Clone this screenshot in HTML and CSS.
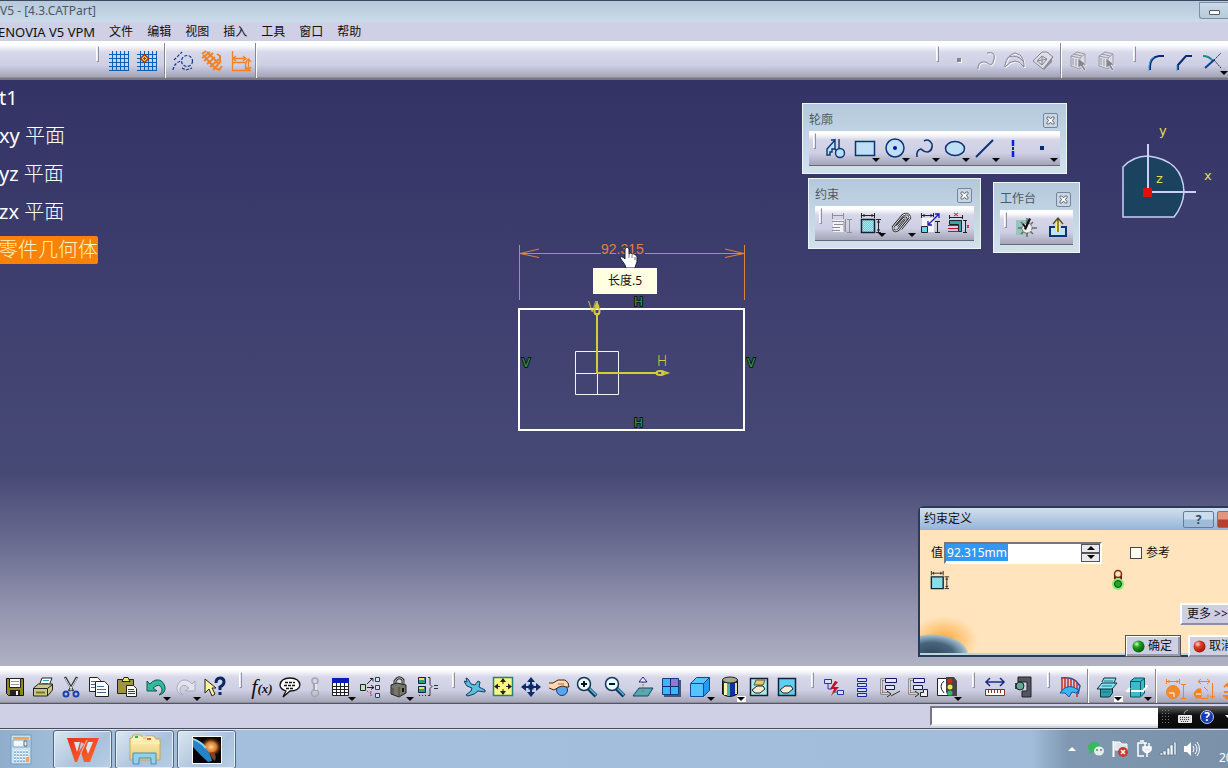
FILE: index.html
```html
<!DOCTYPE html>
<html lang="zh-CN">
<head>
<meta charset="utf-8">
<title>V5 - [4.3.CATPart]</title>
<link rel="stylesheet" href="styles.css">
</head>
<body>
<svg class="defs" aria-hidden="true">
  <defs>
    <radialGradient id="ball-green" cx=".35" cy=".3" r=".8"><stop offset="0" stop-color="#c8ffc0"/><stop offset=".35" stop-color="#1ba01b"/><stop offset="1" stop-color="#054d08"/></radialGradient>
    <radialGradient id="ball-red" cx=".35" cy=".3" r=".8"><stop offset="0" stop-color="#ffd8c8"/><stop offset=".35" stop-color="#e23a22"/><stop offset="1" stop-color="#8a1408"/></radialGradient>
    <linearGradient id="wps" x2="1" y2="1"><stop offset="0" stop-color="#e8301c"/><stop offset="1" stop-color="#ff6a2c"/></linearGradient>
    <linearGradient id="folder" y2="1" x2="0"><stop offset="0" stop-color="#fff3b8"/><stop offset="1" stop-color="#e8cc78"/></linearGradient>
    <radialGradient id="glow" cx=".5" cy=".5" r=".5"><stop offset="0" stop-color="#ffd690"/><stop offset=".5" stop-color="#d9782c"/><stop offset="1" stop-color="#3a1404" stop-opacity="0"/></radialGradient>
    <pattern id="mesh" width="2" height="2" patternUnits="userSpaceOnUse"><path fill="#5fd0e0" d="M0 0h2v2H0z"/><path fill="#a8ecf2" d="M0 0h1v1H0zM1 1h1v1H1z"/></pattern>
    <symbol id="grid" viewBox="0 0 22 22"><path d="M4.500 1v20M8.500 1v20M12.500 1v20M16.500 1v20M1 4.500h20M1 8.500h20M1 12.500h20M1 16.500h20M20.500 1v20M1 20.500h20" stroke="#0a5fb4" fill="none"/></symbol>
    <symbol id="cursor-box" viewBox="0 0 22 22"><path d="M4 7l6-5 8 2v11l-5 5-9-3z" fill="#dcdce8"/><path d="M3 6l6-4 8 2v11l-5 4-9-3zM3 6l9 2v11M12 8l5-4M5 8v7M8 9v7M6 4l8 2" fill="none" stroke="#999aa6"/><path d="M10 8v10l3-2 3 5 2-1-3-5h4z" fill="#85858f" stroke="#f4f4fa" stroke-width=".6"/></symbol>
    <symbol id="dimension" viewBox="0 0 22 22"><path d="M1.500 7.500h13v13h-13z" fill="url(#mesh)" stroke="#123" stroke-width="1.500"/><path d="M1.500 1v5M14.500 1v5M2 3.500h12M4 2v3M12 2v3M16 7.500h5M16 20.500h5M18.500 8v12M17 10h3M17 18h3" fill="none" stroke="#222"/></symbol>
    <symbol id="tree-lines" viewBox="0 0 22 22"><path d="M7 3.500H2.500v14H9" fill="none" stroke="#554" stroke-width="2"/><path d="M7 3.500H2.500v14H9" fill="none" stroke="#ece06a"/><path d="M6.500 2.500h11v4h-11zM6.500 9.500h9v4h-9z" fill="#e5e8ff" stroke="#141468"/><path d="M8 15l4 3-4 3" fill="none" stroke="#222"/></symbol>
    <symbol id="close" viewBox="0 0 9 9"><path d="M1 1h2l1.500 2L6 1h2v2L6 4.500 8 6v2H6L4.500 6 3 8H1V6l2-1.500L1 3z" fill="#fff" stroke="#4a5564" stroke-width=".8"/></symbol>
  </defs>
</svg>

<header class="titlebar">
  <h1 class="titlebar-text">V5 - [4.3.CATPart]</h1>
  <button class="minimize" aria-label="最小化"><span></span></button>
</header>

<nav class="menu">
  <button class="latin">ENOVIA V5 VPM</button><button>文件</button><button>编辑</button><button>视图</button><button>插入</button><button>工具</button><button>窗口</button><button>帮助</button>
</nav>

<div class="bar bar-top">
  <div class="cluster cluster-left">
    <i class="grip"></i>
    <button class="tool" aria-label="网格"><svg><use href="#grid"/></svg></button>
    <button class="tool" aria-label="点对齐"><svg viewBox="0 0 22 22"><use href="#grid"/><path d="M8.500 4.500l4 4-4 4-4-4z" fill="#f7e25a" stroke="#a3340c" stroke-width="1.500"/><path d="M8.500 7v3M7 8.500h3" stroke="#a3340c"/></svg></button>
    <i class="divider"></i>
    <button class="tool" aria-label="构造元素"><svg viewBox="0 0 22 22" fill="none" stroke="#0c3c8c" stroke-width="1.200" stroke-dasharray="3 1.500"><path d="M1 20q1-7 8-9M2 10l8-8" /><circle cx="15" cy="11" r="5.500"/><path d="M10 18l4 2 6-2"/></svg></button>
    <button class="tool drop-space" aria-label="几何约束"><svg viewBox="0 0 22 22" fill="none" stroke="#f08326" stroke-width="2"><path d="M1 4l4-3M1 8l8-6M3 11l9-8M6 14l8-7M9 17l9-8M12 20l8-9M2 5l12 13M6 2l11 11M16 4l3 2v5M14 18l4 2 3-4"/></svg></button>
    <button class="tool" aria-label="尺寸约束"><svg viewBox="0 0 22 22" fill="none" stroke="#f08326" stroke-width="1.300"><path d="M2.500 1v19.500h13V12M3 8.500h13M6 6L3 8.500 6 11M13 6l3 2.500-3 2.500M2 12.500h15M18.500 9v11M16 12l2.500-3 2.500 3M16 17l2.500 3 2.500-3M14 20.500h7"/></svg></button>
    <i class="divider divider-end"></i>
  </div>
  <div class="cluster cluster-right">
    <i class="grip"></i>
    <button class="tool" aria-label="点"><svg viewBox="0 0 22 22"><path d="M10 9h4v4h-4z" fill="#fff"/><path d="M9 8h4v4H9z" fill="#85858f"/></svg></button>
    <button class="tool" aria-label="曲线"><svg viewBox="0 0 22 22" fill="none"><path d="M3 20q0-6 4-7t7 2 5-5-7-6" stroke="#fff"/><path d="M2 19q0-6 4-7t7 2 5-5-7-6" stroke="#858590"/></svg></button>
    <button class="tool" aria-label="曲面"><svg viewBox="0 0 22 22" fill="none"><path d="M2 16Q4 6 12 4l5 2q4 3 4 12-4-6-9-6t-10 6z" stroke="#fff"/><path d="M1 15Q3 5 11 3l5 2q4 3 4 12-4-6-9-6t-10 6zM5 7q8-3 14 4" stroke="#858590"/></svg></button>
    <button class="tool" aria-label="实体"><svg viewBox="0 0 22 22"><path d="M1 11L10 2h5l6 5-10 12z" fill="#dedee8" stroke="#858590"/><path d="M11 19l9-12v5l-8 8z" fill="#8f8f99"/><path d="M5 11l5-5 5 3-5 6zM5 11l5-1 5-1M10 6v9" fill="none" stroke="#85858f"/></svg></button>
    <i class="divider"></i>
    <button class="tool" aria-label="选择体"><svg><use href="#cursor-box"/></svg></button>
    <button class="tool" aria-label="选择面"><svg><use href="#cursor-box"/></svg></button>
    <i class="grip grip-far"></i>
    <button class="tool" aria-label="圆角"><svg viewBox="0 0 22 22" fill="none"><path d="M5 20v-3Q5 7 14 6h5" stroke="#082c72" stroke-width="2"/><path d="M4 21v-5q1-7 5-9" stroke="#39a4e8"/></svg></button>
    <button class="tool" aria-label="倒角"><svg viewBox="0 0 22 22" fill="none"><path d="M5 20v-5l8-9h6" stroke="#082c72" stroke-width="2"/><path d="M4 21v-6" stroke="#39a4e8"/></svg></button>
    <button class="tool drop" aria-label="修剪"><svg viewBox="0 0 22 22" fill="none"><path d="M1 6q6 0 10 5" stroke="#1b8b91" stroke-width="2"/><path d="M3 18l9-8" stroke="#0b3e9e" stroke-width="2"/><path d="M12 10l7-7M12 10l7 8" stroke="#222" stroke-dasharray="2 1"/></svg></button>
  </div>
</div>

<main class="canvas">
  <ul class="tree">
    <li><span>t1</span></li><li><span>xy</span> 平面</li><li><span>yz</span> 平面</li><li><span>zx</span> 平面</li><li class="active">零件几何体</li>
  </ul>

  <svg class="sketch" viewBox="510 240 250 200" fill="none">
    <g stroke="#e0813c"><path d="M519.500 245v55M744.500 245v55M520 253.500h81M645 253.500h99" /><path d="M539 249l-19 4.500 19 4M725 249l19 4.500-19 4"/></g>
    <text class="dim" x="601" y="254">92.315</text>
    <path d="M519 309h225v121H519z" stroke="#fff" stroke-width="2"/>
    <path d="M575.500 351.500h43v43h-43zM575.500 373.500h22M597.500 373v21" stroke="#f3f3ff"/>
    <g stroke="#d4cc3c" stroke-width="2"><path d="M597 374v-61M596 373h62"/><ellipse cx="597" cy="311" rx="2.500" ry="3.500"/><ellipse cx="660" cy="373" rx="3.500" ry="2"/><path d="M597 301v6M595 307l2-4 2 4M662 371l6 2-6 2z" stroke-width="1.500"/></g>
    <g class="axis-names"><text x="657" y="366">H</text><text x="588" y="312">V</text></g>
    <g class="marks"><text x="634" y="306">H</text><text x="634" y="427">H</text><text x="522" y="367">V</text><text x="747" y="367">V</text></g>
    <path d="M625 249q2-4 4 0v5q2-2 3 0 3-1 3 1 2-1 2 2v5q-1 2-2 6h-9q-1-4-3-6l-3-4q1-3 5 1z" fill="#fff" stroke="#181c38"/><path d="M629 254v4M632 255v3M635 257v3" stroke="#777"/>
  </svg>
  <div class="tooltip">长度.5</div>

  <svg class="compass" viewBox="1110 115 118 115" fill="none">
    <path d="M1123 167q10-11 25-11 35 4 36 36-1 14-10 25h-51z" fill="#1b435f" stroke="#c9cff6" stroke-width="1.500"/>
    <path d="M1148 144v48h48" stroke="#c9cff6" stroke-width="2"/><path d="M1143 188h9v9h-9z" fill="#e01208"/>
    <g class="axes"><text x="1159" y="135">y</text><text x="1204" y="180">x</text><text x="1156" y="183">z</text></g>
  </svg>

  <section class="palette palette-profile">
    <header><h2>轮廓</h2><button class="palette-close" aria-label="关闭"><svg><use href="#close"/></svg></button></header>
    <div class="palette-tools"><i class="grip"></i>
      <button class="tool" aria-label="轮廓"><svg viewBox="0 0 22 22" fill="#b9e0f8" stroke="#0b3474" stroke-width="1.400"><path d="M2 18v-6l8-9v9H7v3H5v3zM6 3h4v4" /><path d="M10 12l3 3"/><path d="M14 2v10"/><circle cx="15" cy="16" r="4.500"/></svg></button>
      <button class="tool drop" aria-label="矩形"><svg viewBox="0 0 22 22"><path d="M1.500 4.500h19v14h-19z" fill="#bedff5" stroke="#0b3474" stroke-width="1.500"/></svg></button>
      <button class="tool drop" aria-label="圆"><svg viewBox="0 0 22 22"><circle cx="11" cy="11" r="9" fill="#bedff5" stroke="#0b3474" stroke-width="1.500"/><circle cx="11" cy="11" r="2" fill="#0a13a0"/></svg></button>
      <button class="tool drop" aria-label="样条线"><svg viewBox="0 0 22 22" fill="none" stroke="#0b3474" stroke-width="1.500"><path d="M3 20q-1-7 4-8 3 3 7 3 5-2 4-8-3-6-8-3"/></svg></button>
      <button class="tool drop" aria-label="椭圆"><svg viewBox="0 0 22 22"><ellipse cx="11" cy="11.500" rx="9.500" ry="7" fill="#bedff5" stroke="#0b3474" stroke-width="1.500"/></svg></button>
      <button class="tool drop" aria-label="直线"><svg viewBox="0 0 22 22"><path d="M2 20L19 3" stroke="#0b3474" stroke-width="2"/></svg></button>
      <button class="tool" aria-label="轴"><svg viewBox="0 0 22 22"><path d="M10 3v6M10 14v6" stroke="#0720d8" stroke-width="2.500"/><path d="M10 10v3" stroke="#0b3474" stroke-width="2"/></svg></button>
      <button class="tool drop" aria-label="点"><svg viewBox="0 0 22 22"><path d="M8 9h4v4H8z" fill="#072a6c"/></svg></button>
    </div>
  </section>

  <section class="palette palette-constraint">
    <header><h2>约束</h2><button class="palette-close" aria-label="关闭"><svg><use href="#close"/></svg></button></header>
    <div class="palette-tools"><i class="grip"></i>
      <button class="tool" aria-label="约束对话框"><svg viewBox="0 0 22 22" fill="none" stroke="#8e8e98"><path d="M2 8h11v12H2z" fill="#f1f1f6" stroke="none"/><path d="M1.500 1v6M12.500 1v6M2 3.500h10M1 9.500h12v10M3 12.500h9M1 15.500h8M1 18.500h8M16 7.500h5M16 20.500h5M18.500 8v12M14.500 7v13"/></svg></button>
      <button class="tool drop" aria-label="约束"><svg><use href="#dimension"/></svg></button>
      <button class="tool drop" aria-label="固联"><svg viewBox="0 0 22 22" fill="none"><path d="M7 14l7-8q3-1 2 2L8 18q-5 3-5-3L13 3q6-3 7 3L11 17" stroke="#222" stroke-width="2.400"/><path d="M7 14l7-8q3-1 2 2L8 18q-5 3-5-3L13 3q6-3 7 3L11 17" stroke="#f4f4f8"/></svg></button>
      <button class="tool" aria-label="动画约束"><svg viewBox="0 0 22 22" fill="none" stroke="#222"><path d="M3 6h12v14H3z" fill="#f4f4f8" stroke="none"/><path d="M2.500 1v5M14.500 1v4M3 3.500h11M5 2v3M12 2v3M18.500 9v11M16 9.500h5M16 20.500h5"/><path d="M2.500 14.500h6v6h-6z" fill="#67d8ec"/><path d="M9 13l11-11M16 2h4v4M9 9v4h4" stroke="#1919b0" stroke-width="1.300"/></svg></button>
      <button class="tool" aria-label="编辑多重约束"><svg viewBox="0 0 22 22" fill="none" stroke="#222"><path d="M2.500 3v4M15.500 3v4M3 5.500h12M18.500 8v12M16 8.500h4M16 20.500h4"/><path d="M2.500 8.500h12v11h-3v-7h-9z" fill="#38a4ac"/><path d="M1 13.500h10M1 16.500h10M1 19.500h10M7 1l4 3M11 1L7 4M20 13l2 3M22 13l-2 3" stroke="#c8102c"/></svg></button>
    </div>
  </section>

  <section class="palette palette-workbench">
    <header><h2>工作台</h2><button class="palette-close" aria-label="关闭"><svg><use href="#close"/></svg></button></header>
    <div class="palette-tools"><i class="grip"></i>
      <button class="tool" aria-label="草图编辑器"><svg viewBox="0 0 22 22"><path d="M0 4h12v15H0z" fill="#95c5bc"/><g stroke="#666c66" stroke-width="1.500"><path d="M11 2v19M2 12h19M5 6l12 12M17 6L5 18"/></g><circle cx="11" cy="12" r="5" fill="#eee" stroke="#666" stroke-dasharray="2 1"/><path d="M13 2l2 1-5 11-2-1z" fill="#111"/><path d="M7 8l3 4" stroke="#111" stroke-width="2"/></svg></button>
      <button class="tool workbench-exit" aria-label="退出工作台"><svg viewBox="0 0 22 22"><path d="M3 11h16v9H3z" fill="#bfe4f6"/><path d="M8 11H3v9h16v-9h-5" fill="none" stroke="#0b3474" stroke-width="2"/><path d="M9 6h4v10H9z" fill="#fff07a"/><path d="M6 8l5-6 5 6M11 3v13" fill="none" stroke="#5a4c10" stroke-width="1.300"/></svg></button>
    </div>
  </section>

  <form class="dialog">
    <header><h2>约束定义</h2><button type="button" class="win-btn" aria-label="帮助">?</button><button type="button" class="win-btn win-close" aria-label="关闭">✕</button></header>
    <div class="dialog-body">
      <div class="value-row">
        <label for="value">值</label>
        <span class="spin"><span class="spin-field"><input id="value" value="92.315mm"></span><span class="spin-buttons"><button type="button" aria-label="增加"></button><button type="button" class="down" aria-label="减少"></button></span></span>
        <label class="check"><input type="checkbox">参考</label>
      </div>
      <div class="icon-row">
        <svg class="small-icon"><use href="#dimension"/></svg>
        <svg class="lock-icon" viewBox="0 0 16 22" fill="none"><path d="M5 12V6M11 12V6" stroke="#6c1a12" stroke-width="2"/><circle cx="8" cy="5" r="3.500" fill="#ffe4c0" stroke="#8a2018" stroke-width="1.500"/><circle cx="8" cy="15" r="6" fill="#88ea70"/><circle cx="8" cy="15" r="3.500" fill="#22a52a" stroke="#064c10"/></svg>
      </div>
      <div class="more-row"><button type="button" class="more">更多 &gt;&gt;</button></div>
      <div class="actions">
        <button type="button" class="default"><svg viewBox="0 0 14 14"><circle cx="7" cy="7" r="6.500" fill="url(#ball-green)"/></svg>确定</button>
        <button type="button"><svg viewBox="0 0 14 14"><circle cx="7" cy="7" r="6.500" fill="url(#ball-red)"/></svg>取消</button>
      </div>
    </div>
  </form>
</main>

<div class="bar bar-bottom">
  <button class="tool" aria-label="保存"><svg viewBox="0 0 22 22"><path d="M2.500 2.500h17v17h-15l-2-2z" fill="#8c8a1c" stroke="#111"/><path d="M5.500 2.500h11v9h-11z" fill="#fff" stroke="#222"/><path d="M7 5.500h8M7 8.500h8" stroke="#999"/><path d="M6 14h10v5H6z" fill="#222"/><path d="M12 15h2v4h-2z" fill="#fff"/></svg></button>
  <button class="tool" aria-label="打印"><svg viewBox="0 0 22 22" stroke="#222"><path d="M7 10l3-8h10l-3 8z" fill="#fff"/><path d="M11 4.500h6M10 7.500h6" stroke="#19a8c0"/><path d="M1.500 12l5-4h14v6l-5 6h-14z" fill="#c9c98c"/><path d="M2 12.500h13.500l5-4M15.500 13v7" fill="none"/><path d="M4 16.500h9" stroke="#777722" stroke-width="2"/></svg></button>
  <button class="tool" aria-label="剪切"><svg viewBox="0 0 22 22" fill="none"><path d="M5 1l8 14M17 1L9 15" stroke="#333" stroke-width="2.500"/><path d="M5 2l7 12M17 2l-7 12" stroke="#dfe8ee"/><circle cx="6" cy="18" r="2.500" stroke="#1742b0" stroke-width="2"/><circle cx="16" cy="18" r="2.500" stroke="#1742b0" stroke-width="2"/></svg></button>
  <button class="tool" aria-label="复制"><svg viewBox="0 0 22 22" fill="#fff" stroke="#222"><path d="M1.500 1.500h8l3 3v11h-11z"/><path d="M7.500 5.500h9l4 4v11h-13z"/><path d="M9 10.500h7M9 13.500h9M9 16.500h9M3 5.500h4M3 8.500h4M3 11.500h4" stroke="#456b98"/></svg></button>
  <button class="tool" aria-label="粘贴"><svg viewBox="0 0 22 22" stroke="#222"><path d="M1.500 3.500h16v14h-16z" fill="#a09444"/><path d="M6 5.500l2-4h4l2 4z" fill="#f4e76c"/><path d="M10.500 9.500h7l3 3v8h-10z" fill="#fff"/><path d="M12 13.500h6M12 15.500h7M12 17.500h7" stroke="#2342a0"/></svg></button>
  <button class="tool drop" aria-label="撤销"><svg viewBox="0 0 22 22"><path d="M2 5v10h10l-4-3q7-6 9 1 1 3-3 6 7-2 6-8-2-8-9-7-4 1-6 4z" fill="#35b8a0" stroke="#095b49"/></svg></button>
  <button class="tool drop" aria-label="重做"><svg viewBox="0 0 22 22"><path d="M20 5v10H10l4-3q-7-6-9 1-1 3 3 6-7-2-6-8 2-8 9-7 4 1 6 4z" fill="#e4e4ee" stroke="#aaaab8"/></svg></button>
  <button class="tool" aria-label="这是什么"><svg viewBox="0 0 22 22"><path d="M1 3v14l4-4 3 7 3-2-3-6h4z" fill="#fff59a" stroke="#222"/><path d="M12 7q0-5 4-5t4 4q0 3-4 5v3" fill="none" stroke="#082864" stroke-width="3"/><path d="M14.500 16h3v3h-3z" fill="#082864"/></svg></button>
  <i class="grip"></i>
  <button class="tool fx" aria-label="公式">f<small>(x)</small></button>
  <button class="tool" aria-label="注释"><svg viewBox="0 0 22 22" fill="#fff" stroke="#111" stroke-width="1.300"><path d="M7 15q-6-2-6-6 1-7 10-7t10 7q-1 6-10 6l-7 6z"/><path d="M6 6.500h10M5 9.500h12M7 12.500h7" stroke-dasharray="3 1"/></svg></button>
  <button class="tool narrow" aria-label="链接"><svg viewBox="0 0 22 22" fill="none" stroke="#a4a4b0" stroke-width="1.500"><circle cx="11" cy="5" r="3"/><circle cx="11" cy="17" r="3.500"/><path d="M11 7v8" stroke-width="4"/><path d="M12 8v6" stroke="#fff"/></svg></button>
  <button class="tool drop" aria-label="设计表"><svg viewBox="0 0 22 22"><path d="M3 3h16v16H3z" fill="#fff"/><path d="M2.500 6v13.500h16V6M2 10.500h17M2 13.500h17M2 16.500h17M6.500 7v13M10.500 7v13M14.500 7v13" stroke="#222" fill="none"/><path d="M2 2h17v5H2z" fill="#071eb4"/></svg></button>
  <button class="tool" aria-label="知识"><svg viewBox="0 0 22 22" fill="#ddf" stroke="#1b35c0"><path d="M16.500 1.500h4v4h-4zM16.500 9.500h4v4h-4zM16.500 17.500h4v4h-4z"/><path d="M1.500 8.500h5v6h-5z" fill="#b8e8b0" stroke="#222"/><path d="M8 8l6-6M8 11.500h7M11 2.500h3v3M12 9l3 2.500-3 2" fill="none" stroke="#222"/><path d="M8 15l6 4M12 15v6" stroke="#c02040" stroke-dasharray="1.500 2"/></svg></button>
  <button class="tool drop" aria-label="锁定"><svg viewBox="0 0 22 22"><path d="M7 9V5q4-6 8-1v6" fill="none" stroke="#333" stroke-width="3"/><path d="M7 9V5q4-6 8-1v6" fill="none" stroke="#b9b9a8"/><path d="M3 9l6-2 9 2v8l-7 4-8-3z" fill="#77776a" stroke="#222"/><path d="M11 11v10M5 12v6" stroke="#444"/><path d="M14 12h2v4h-2z" fill="#111"/></svg></button>
  <button class="tool" aria-label="等效尺寸"><svg viewBox="0 0 22 22"><path d="M1.500 1.500h7v6h-7zM1.500 10.500h7v6h-7z" fill="#2b9c82" stroke="#124"/><path d="M2 3h5M2 12h5" stroke="#f8e054" stroke-width="2"/><path d="M2 19.500h7" stroke="#222" stroke-dasharray="1 2"/><path d="M11 1.500h2v7l2 2-2 2v7h-2M17 9.500h4M17 12.500h4" fill="none" stroke="#333"/></svg></button>
  <i class="grip"></i>
  <button class="tool" aria-label="飞行模式"><svg viewBox="0 0 22 22"><path d="M2 2l2 1 3 5 4 1 3-4 2 1-1 5 6 3v2l-7-1-4 3-6 2-2-1 5-4 1-3-5-2-2-3-1-2 3 1z" fill="#5bc0dc" stroke="#123c66"/></svg></button>
  <button class="tool" aria-label="全部适应"><svg viewBox="0 0 22 22"><path d="M1.500 1.500h19v18h-19z" fill="#faf786" stroke="#28807c" stroke-width="1.500"/><path d="M11 3v5M11 13v5M3 10.500h5M14 10.500h5" stroke="#222"/><path d="M11 2l3 4H8zM11 19l3-4H8zM2 10.500l4-3v6zM20 10.500l-4-3v6z" fill="#222"/></svg></button>
  <button class="tool" aria-label="平移"><svg viewBox="0 0 22 22"><path d="M11 3v16M3 11h16" stroke="#0b2c68" stroke-width="2"/><path d="M11 1l4 5H7zM11 21l4-5H7zM1 11l5-4v8zM21 11l-5-4v8zM8.500 8.500h5v5h-5z" fill="#0b2c68"/></svg></button>
  <button class="tool" aria-label="旋转"><svg viewBox="0 0 22 22"><circle cx="14" cy="14" r="5.500" fill="#5ba5ea" stroke="#124080"/><path d="M1 7h4l5-3h7q4 2 4 7h-3l-3-1-4 1-5 3-5-2" fill="#ffd8b0" stroke="#45251a"/><path d="M10 8h6" stroke="#a66a4c"/></svg></button>
  <button class="tool" aria-label="放大"><svg viewBox="0 0 22 22"><path d="M12 12l8 8" stroke="#163a62" stroke-width="4"/><path d="M13 12l7 7" stroke="#4cc0dc" stroke-width="1.500"/><circle cx="8" cy="8" r="6.500" fill="#e4fbff" stroke="#143453" stroke-width="1.500"/><path d="M5 8h6M8 5v6" stroke="#111" stroke-width="2"/></svg></button>
  <button class="tool" aria-label="缩小"><svg viewBox="0 0 22 22"><path d="M12 12l8 8" stroke="#163a62" stroke-width="4"/><path d="M13 12l7 7" stroke="#4cc0dc" stroke-width="1.500"/><circle cx="8" cy="8" r="6.500" fill="#e4fbff" stroke="#143453" stroke-width="1.500"/><path d="M5 8h6" stroke="#111" stroke-width="2"/></svg></button>
  <button class="tool" aria-label="法线视图"><svg viewBox="0 0 22 22"><path d="M1 20l6-8h14l-5 8z" fill="#55a8b4" stroke="#12465a"/><path d="M11 5v11" stroke="#9b6a18" stroke-dasharray="2 1"/><path d="M11 1l4 5H7z" fill="#eef" stroke="#2a2384"/></svg></button>
  <button class="tool" aria-label="多视图"><svg viewBox="0 0 22 22"><path d="M4 4h17v17H4z" fill="#4b527c"/><path d="M2.500 2.500h16v16h-16z" fill="#39b8f4" stroke="#153c86"/><path d="M11 3h7v7h-7z" fill="#9976cb"/><path d="M10.500 2v17M2 10.500h17" stroke="#102d70"/></svg></button>
  <button class="tool drop" aria-label="等轴测视图"><svg viewBox="0 0 22 22" stroke="#1046a0"><path d="M1.500 7.500l6-6h13v13l-6 6h-13z" fill="#54c4ff"/><path d="M14.500 7.500l6-6v13l-6 6z" fill="#249af0"/><path d="M2 7.500h12.500" fill="none"/></svg></button>
  <button class="tool drop light-drop" aria-label="着色"><svg viewBox="0 0 22 22"><path d="M3.500 4v14q7 5 15 0V4" fill="#162da0" stroke="#111"/><path d="M5 7h3v12H5z" fill="#f8f4b0"/><path d="M8 7h3v13H8z" fill="#41b69c"/><path d="M16 7h2v11h-2z" fill="#dfe37c"/><ellipse cx="11" cy="4" rx="7.500" ry="3" fill="#a9aa8b" stroke="#222"/></svg></button>
  <button class="tool" aria-label="隐藏显示"><svg viewBox="0 0 22 22"><path d="M2.500 2.500h17v17h-17z" fill="#aceaf2" stroke="#123" stroke-width="1.500"/><path d="M8 4h9l-2 5H6z" fill="#e6cc62" stroke="#555"/><path d="M4 14l5-4h6l2 3-5 4H7z" fill="#f3ecd2" stroke="#222"/></svg></button>
  <button class="tool" aria-label="交换可视空间"><svg viewBox="0 0 22 22"><path d="M2.500 2.500h17v17h-17z" fill="#60cff5" stroke="#123" stroke-width="1.500"/><path d="M4 14l5-4h6l2 3-5 4H7z" fill="#f3ecd2" stroke="#222"/></svg></button>
  <i class="grip"></i>
  <button class="tool" aria-label="更新"><svg viewBox="0 0 22 22"><path d="M1.500 3.500h7v4h-7zM14.500 14.500h6v4h-6z" fill="#ddf" stroke="#2233b4"/><path d="M5 8v5h4M10 16h4" stroke="#2233b4" fill="none"/><path d="M12 5l-5 8h4l-3 7 8-9h-5l4-5z" fill="#c41024"/></svg></button>
  <button class="tool" aria-label="结构"><svg viewBox="0 0 22 22" fill="#d5ddff" stroke="#1625a4"><path d="M6.500 2.500h9v3h-9zM6.500 7.500h9v3h-9zM6.500 12.500h9v3h-9zM6.500 17.500h9v3h-9z"/></svg></button>
  <button class="tool" aria-label="历史曲线"><svg viewBox="0 0 22 22"><use href="#tree-lines"/><path d="M12 20l9-5" stroke="#333"/></svg></button>
  <button class="tool" aria-label="历史体"><svg viewBox="0 0 22 22"><use href="#tree-lines"/><path d="M13.500 20.500v-4h3v-3h4v7z" fill="#eef" stroke="#222"/></svg></button>
  <button class="tool drop" aria-label="状态"><svg viewBox="0 0 22 22"><path d="M1.500 2.500h11v17h-11z" fill="#fff" stroke="#222"/><path d="M8 5q-6 5 0 12" fill="none" stroke="#222"/><path d="M10 1h8l3 4v15h-9l-2-4z" fill="#444"/><circle cx="14" cy="5" r="2.500" fill="#d12b20"/><circle cx="14" cy="11" r="2.500" fill="#f6ed3d"/><circle cx="14" cy="17" r="2.500" fill="#28bb73"/></svg></button>
  <i class="grip"></i>
  <button class="tool" aria-label="测量间距"><svg viewBox="0 0 22 22"><path d="M2 6h18M6 2L2 6l4 4M16 2l4 4-4 4" fill="none" stroke="#1b2a8c" stroke-width="1.500"/><path d="M1.500 13.500h19v6h-19z" fill="#fff" stroke="#882e20"/><path d="M4.500 14v3M7.500 14v3M10.500 14v3M13.500 14v3M16.500 14v3" stroke="#882e20"/></svg></button>
  <button class="tool" aria-label="测量项"><svg viewBox="0 0 22 22"><path d="M6 1h13v20h-9v-6h5V6H6z" fill="#555560" stroke="#222"/><path d="M3 7h4v6H3z" fill="#444"/><circle cx="8" cy="10" r="4" fill="#62a99c" stroke="#222"/></svg></button>
  <i class="grip"></i>
  <button class="tool" aria-label="分析"><svg viewBox="0 0 22 22"><path d="M2 2q10-1 15 3l4 5-2 8" fill="none" stroke="#264b9c" stroke-width="1.500"/><path d="M3 2v13M6 2v10M9 2v9M12 3v8M15 4v11M18 7v14" stroke="#c62d20" stroke-width="1.500"/><path d="M1 17q5-8 13-6l6 3-3 3-4-1-3 5-4-4z" fill="#38b8ee" stroke="#1557a8"/></svg></button>
  <i class="divider"></i>
  <button class="tool drop light-drop" aria-label="剖切零件"><svg viewBox="0 0 22 22" stroke="#08333c"><path d="M4.500 12h12v5l-3 4h-9z" fill="#2e9ead"/><path d="M1 13l5-6h15l-5 6zM6 6l2-4h12l-2 5" fill="#89e5ef"/><path d="M8 5h9M6 10h10M6 16h8" stroke="#147a8e"/></svg></button>
  <button class="tool drop" aria-label="三维视图"><svg viewBox="0 0 22 22" stroke="#095461"><path d="M4.500 5l4-3h10v15l-4 4h-10z" fill="#39bccc"/><path d="M4.500 5.500h10l4-3M14.500 6v14" fill="none"/><path d="M4 15H1l3-3M5 15h12l4-5h-2" fill="none" stroke="#fff" stroke-width="2"/></svg></button>
  <i class="divider"></i>
  <button class="tool low" aria-label="圆尺寸"><svg viewBox="0 0 22 22" fill="none" stroke="#f18322"><circle cx="9" cy="14" r="6.500" fill="#f28a2d"/><path d="M2.500 1v5M15.500 1v5M3 3.500h12M5 2v3M13 2v3M17 6.500h5M17 20.500h5M19.500 7v13"/><path d="M5 15h5v4" stroke="#fff"/></svg></button>
  <button class="tool drop-space low" aria-label="角度尺寸"><svg viewBox="0 0 22 22" fill="none" stroke="#f18322"><path d="M5 3.500h12M8 1L5 3.500 8 6M14 1l3 2.500L14 6M19.500 5v15M17 18l2.500 2 2.500-2M8 20.500h7v-4M11 9l4 4"/><path d="M1 16q2-6 7-5v9H3z" fill="#f18322"/><path d="M3 16h5" stroke="#fff"/></svg></button>
  <button class="tool low" aria-label="距离尺寸"><svg viewBox="0 0 22 22" fill="none" stroke="#f18322" stroke-width="2"><path d="M2 9l6-5M2 14h10v6H3M5 8l8 2M1 18h8"/></svg></button>
</div>

<div class="status">
  <input class="command" aria-label="命令">
  <div class="language">
    <i class="dots"></i>
    <button aria-label="键盘"><svg viewBox="0 0 16 16"><path d="M7 5q0-3 4-4" fill="none" stroke="#999"/><path d="M1.500 6.500h13v7h-13z" fill="#ddd" stroke="#eee"/><path d="M3 8.500h10M3 10.500h10M4 12.500h8" stroke="#444" stroke-dasharray="1 1"/></svg></button>
    <button class="language-help" aria-label="输入法帮助">?</button>
    <button class="language-more" aria-label="选项"></button>
  </div>
</div>

<footer class="taskbar">
  <button class="task calculator" aria-label="计算器"><svg viewBox="0 0 32 32"><path d="M6 1h20v29H6z" fill="#c7e2f4" stroke="#709bbf"/><path d="M8 3h16v2H8z" fill="#f3a34b"/><path d="M8 6h16v7H8z" fill="#eff9ff" stroke="#7ca1bf"/><path d="M19 7h3v5h-3z" fill="none" stroke="#486781"/><path d="M9 17h14M9 20h14M9 23h14M9 26h14" stroke="#fff" stroke-width="2" stroke-dasharray="2 1"/><path d="M9 18h14M9 21h14M9 24h14M9 27h14" stroke="#5b85aa" stroke-dasharray="2 1"/><path d="M21 23h3v5h-3z" fill="#eaa36c"/></svg></button>
  <button class="task framed" aria-label="WPS"><svg viewBox="0 0 32 32"><path d="M0 4h22l-3 7-5-3-2 10 9-14h11l-9 24h-6l-3-10-4 10H8z" fill="url(#wps)"/><path d="M7 8h6l-3 10zM21 8h5l-5 12-2-6z" fill="#dbe5ee"/><path d="M14 19l6-13" stroke="#f8c8bc" stroke-width="1"/></svg></button>
  <button class="task framed" aria-label="文件夹"><svg viewBox="0 0 32 32"><path d="M1 4h2l1-3h8l2 3h3V2h8l2 3h4v21H1z" fill="url(#folder)" stroke="#c7a850"/><path d="M2 9h29M3 6h9l2-3h9l2 5" fill="none" stroke="#fff6cc"/><path d="M6 2h3v2H6z" fill="#42a46b"/><path d="M18 4h4v2h-4z" fill="#cc6544"/><path d="M4 30V19h23v11h-5v-6H10v6z" fill="#92cff1" stroke="#4a8bbd"/></svg></button>
  <button class="task framed" aria-label="CATIA"><svg viewBox="0 0 32 32"><path d="M1 2h30v28H1z" fill="#fff"/><path d="M2 3h28v26H2z" fill="#080508"/><ellipse cx="20" cy="13" rx="11" ry="10" fill="url(#glow)"/><path d="M2 6q7 3 12 8 6 6 7 13l-4 1Q9 21 2 13z" fill="#2583c8"/><path d="M2 5q8 3 13 9" fill="none" stroke="#8fd0f2" stroke-width="2"/><path d="M22 18q4 3 2 9-4-3-5-8z" fill="#86401a"/></svg></button>
  <div class="tray">
    <button class="tray-up" aria-label="显示隐藏的图标"></button>
    <button aria-label="微信"><svg viewBox="0 0 18 18"><ellipse cx="7" cy="7" rx="6" ry="5" fill="#35ba60"/><path d="M3 10l-1 4 4-2" fill="#35ba60"/><ellipse cx="12" cy="11" rx="5" ry="4.500" fill="#e4eee9"/><circle cx="10" cy="10" r=".7"/><circle cx="14" cy="10" r=".7"/></svg></button>
    <button aria-label="操作中心"><svg viewBox="0 0 18 18"><path d="M2.500 1v16" stroke="#fff" stroke-width="2"/><path d="M4 2h5l2 2h5v8H9l-2-2H4z" fill="#dce4ec" stroke="#fff"/><circle cx="12" cy="12" r="5" fill="#c9392e"/><path d="M10 10l4 4M14 10l-4 4" stroke="#fff" stroke-width="1.500"/></svg></button>
    <button aria-label="电源"><svg viewBox="0 0 18 18" fill="none" stroke="#fff" stroke-width="1.500"><path d="M11 4V3H3v13h6M5 1h4"/><path d="M8 7h8v3q-4 5-8 0zM10 3v4M14 3v4M12 12v5" fill="#eef"/></svg></button>
    <button aria-label="网络"><svg viewBox="0 0 18 18" fill="#eef6fc" stroke="#52677c" stroke-width=".5"><path d="M1 13h3v2H1zM4 11h3v4H4zM8 8h3v7H8zM11 5h3v10h-3zM15 2h2v13h-2z"/></svg></button>
    <button aria-label="音量"><svg viewBox="0 0 18 18"><path d="M1 6h3l4-4v14l-4-4H1z" fill="#fff"/><path d="M10 6q2 3 0 6M12 4q4 5 0 10M14 2q5 7 0 14" fill="none" stroke="#fff"/></svg></button>
    <span class="clock">20</span>
  </div>
</footer>
</body>
</html>
```

FILE: styles.css
```css
* { box-sizing: border-box; }
html, body { height: 100%; }
body {
  margin: 0;
  display: flex;
  flex-direction: column;
  overflow: hidden;
  background: #cfcfe5;
  color: #111;
  font: 12px/16px "Noto Sans", "Noto Sans CJK SC", sans-serif;
}
button, input { font: inherit; color: inherit; }
button { padding: 0; border: 0; background: none; }
h1, h2 { margin: 0; font-size: 12px; font-weight: 400; }
svg { display: block; }
.defs { position: absolute; width: 0; height: 0; }

/* Title and menu */
.titlebar {
  display: flex;
  flex: none;
  justify-content: space-between;
  height: 22px;
  border-top: 1px solid #3b4a60;
  background: linear-gradient(#b6c8da, #cadbe9);
}
.titlebar-text { padding-top: 2px; color: #4b5865; }
.minimize {
  display: grid;
  place-items: center;
  width: 29px;
  height: 17px;
  margin-top: 1px;
  border: 1px solid #7f90a6;
  border-right: 0;
  border-radius: 0 0 0 3px;
  background: linear-gradient(#c9d9e8, #b8cadb);
}
.minimize span { width: 11px; height: 5px; margin-top: 4px; border: 1px solid #556; border-radius: 1px; background: #fff; }
.menu { display: flex; flex: none; gap: 14px; height: 19px; background: #cfcfe5; }
.menu .latin { margin-left: -2px; font-size: 13px; }

/* Tool bars */
.bar {
  position: relative;
  display: flex;
  flex: none;
  height: 38px;
  overflow: hidden;
  background: linear-gradient(#fff 0, #fff 4px, #d8d8ea 11px, #cfcfe5 24px, #a5a5b8 36px, #77778a 37px);
  border-bottom: 1px solid #55555f;
}
.bar-top { height: 39px; justify-content: space-between; border-bottom: 2px solid #77777d; }
.bar-bottom { padding: 4px 0 0 1px; }
.cluster { display: flex; align-items: flex-start; padding-top: 3px; }
.cluster-left { padding-left: 86px; }
.tool { position: relative; display: grid; flex: none; place-items: center; width: 28px; height: 33px; }
.tool svg { width: 22px; height: 22px; }
.tool.narrow { width: 22px; }
.tool.low { padding: 5px 0 0 2px; }
.tool.drop, .tool.drop-space { width: 30px; }
.tool.drop::after {
  content: "";
  position: absolute;
  right: 0;
  bottom: 2px;
  border: 4px solid transparent;
  border-top-color: #080808;
  border-bottom: 0;
}
.tool.light-drop::before { content: ""; position: absolute; right: -1px; bottom: 1px; width: 9px; height: 6px; background: #fff; }
.fx { display: flex; align-items: center; justify-content: center; font: italic 22px "Liberation Serif", serif; }
.fx small { padding-top: 4px; font-size: 13px; font-weight: 700; }
.grip {
  flex: none;
  width: 3px;
  height: 16px;
  margin: 2px 6px 0 10px;
  border: 1px solid #fff;
  border-right-color: #9090a2;
  border-bottom-color: #9090a2;
  background: #e8e8f4;
}
.grip-far { margin-left: 12px; }
.divider { flex: none; width: 2px; height: 36px; margin: -1px 3px 0; border-left: 1px solid #888894; background: #fff; }
.divider-end { margin-left: 0; }

/* Modelling area */
.canvas {
  position: relative;
  flex: 1;
  overflow: hidden;
  background: linear-gradient(#333366 0, #474975 67%, #696b90 79%, #9293ae 90%, #b0b1c3 100%);
}
.tree {
  display: flex;
  flex-direction: column;
  align-items: flex-start;
  gap: 10px;
  margin: 0;
  padding: 4px 0 0;
  color: #fff;
  font-size: 20px;
  font-weight: 300;
  line-height: 28px;
  list-style: none;
}
.tree span { margin-left: -1px; font-weight: 400; }
.tree .active { border-radius: 0 2px 2px 0; background: #fb8208; color: #fff3bd; margin-left: -2px; }
.sketch { position: absolute; left: 510px; top: 160px; width: 250px; height: 200px; }
.sketch .dim { fill: #e0813c; font: 14px "Liberation Sans", sans-serif; }
.sketch .axis-names { fill: #d4cc3c; font: 300 14px "Noto Sans", sans-serif; }
.sketch .marks { fill: #35994a; stroke: #06190d; stroke-width: 2px; paint-order: stroke; font: 12px "DejaVu Sans", sans-serif; }
.tooltip { position: absolute; left: 593px; top: 188px; padding: 4px 14px; border: 1px solid #fff; background: #ffffe1; }
.compass { position: absolute; right: 0; top: 35px; width: 118px; height: 115px; }
.axes { fill: #e2df54; font: 13px "DejaVu Sans", sans-serif; }

/* Floating palettes */
.palette {
  position: absolute;
  padding: 0 6px 7px;
  border: 1px solid #eef4f9;
  background: linear-gradient(#b5c9dc, #d2e1ed);
}
.palette header { display: flex; align-items: center; justify-content: space-between; height: 27px; padding: 5px 2px 0 0; }
.palette h2 { color: #4d5a66; }
.palette-close { display: grid; place-items: center; width: 15px; height: 15px; border: 1px solid #75859a; border-radius: 2px; background: #c8d6e3; }
.palette-close svg { width: 9px; height: 9px; }
.palette-tools {
  display: flex;
  height: 35px;
  border-bottom: 1px solid #686878;
  background: linear-gradient(#fff 0, #fff 3px, #d6d6e8 9px, #cfcfe5 22px, #a5a5b8 100%);
}
.palette-tools .grip { margin-left: 4px; }
.palette-profile { left: 802px; top: 23px; width: 265px; }
.palette-constraint { left: 808px; top: 98px; width: 173px; }
.palette-workbench { left: 993px; top: 102px; width: 87px; }
.workbench-exit { margin-left: 3px; }

/* Constraint dialog */
.dialog {
  position: absolute;
  left: 918px;
  top: 426px;
  width: 348px;
  border: 2px solid #263d56;
  border-radius: 6px 0 0 0;
  background: #bdd1e4;
}
.dialog header { display: flex; align-items: center; height: 22px; gap: 3px; padding: 0 16px 0 4px; background: linear-gradient(#d3dfec, #94b5d8); }
.dialog h2 { flex: 1; }
.win-btn {
  width: 31px;
  height: 17px;
  border: 1px solid #627d9a;
  border-radius: 2px;
  background: linear-gradient(#cbdded 48%, #9ebbd7 52%);
  color: #34475b;
  font-weight: 700;
  line-height: 15px;
}
.win-close { background: linear-gradient(#e1947f 48%, #b8402e 52%); color: #fff; }
.dialog-body {
  height: 125px;
  padding: 11px 0 0 11px;
  border-bottom: 2px solid #b9d6df;
  background:
    radial-gradient(ellipse 44px 25px at 12px 125px, #344457 0, #47657e 50%, #9cbacb 78%, transparent 84%),
    radial-gradient(ellipse 34px 24px at 24px 110px, #ffa638 0, #ffc77c 50%, transparent 100%),
    #ffe4bd;
}
.value-row { display: flex; align-items: center; height: 23px; }
.spin { display: flex; width: 158px; height: 22px; margin-left: 1px; border: 2px solid #777; border-right-color: #fff; border-bottom-color: #fff; background: #fff; }
.spin-field { flex: 1; min-width: 0; }
.spin-field input { width: 62px; height: 17px; padding: 0 0 0 1px; border: 0; outline: 0; background: #3398f4; color: #fff; }
.spin-buttons { display: flex; flex-direction: column; width: 19px; }
.spin-buttons button { display: grid; place-items: center; flex: 1; border: 1px solid #555; background: #e9e9ef; }
.spin-buttons button::after { content: ""; border: 4px solid transparent; border-top: 0; border-bottom-color: #000; }
.spin-buttons .down::after { border-top: 4px solid #000; border-bottom: 0; }
.check { display: flex; align-items: center; gap: 4px; margin-left: 28px; }
.check input { appearance: none; width: 12px; height: 12px; margin: 0; border: 1px solid #444; background: #fffff0; }
.icon-row { display: flex; align-items: center; height: 32px; }
.small-icon { width: 20px; height: 20px; margin-left: -1px; }
.lock-icon { width: 16px; height: 22px; margin-left: 160px; }
.more-row { display: flex; height: 26px; padding: 7px 0 0 249px; }
.more-row button, .actions button {
  flex: none;
  height: 22px;
  border: 2px solid #fff;
  border-right-color: #8d8da0;
  border-bottom-color: #8d8da0;
  background: #cfcfe3;
}
.more { width: 64px; padding-left: 5px; text-align: left; white-space: nowrap; }
.actions { display: flex; gap: 7px; padding: 13px 0 0 194px; }
.actions button { display: flex; align-items: center; gap: 3px; width: 56px; padding-left: 3px; }
.actions .default { border: 1px solid #555; padding-left: 6px; box-shadow: inset 1px 1px #fff, inset -2px -2px #9999ad; }
.actions svg { width: 13px; height: 13px; }

/* Status line */
.status { display: flex; flex: none; justify-content: flex-end; height: 25px; padding-top: 2px; border-bottom: 1px solid #4b4b5c; }
.command { width: 228px; height: 20px; border: 2px solid #777784; border-right: 0; border-bottom-color: #eee; background: #fff; }
.language { display: flex; align-items: center; gap: 7px; width: 70px; height: 22px; padding-left: 3px; overflow: hidden; background: linear-gradient(#65656a, #111 40%, #080808); }
.language button { flex: none; }
.language svg { width: 16px; height: 16px; }
.dots { flex: none; width: 9px; height: 16px; background: radial-gradient(circle, #777 1px, transparent 1px) 0 0 / 3px 3px; }
.language-help { width: 14px; height: 14px; border: 1px solid #b9c8f0; border-radius: 50%; background: #1938ae; color: #fff; font-weight: 700; line-height: 12px; }
.language-more { margin-left: 4px; border: 4px solid transparent; border-top-color: #fff; border-bottom: 0; }

/* Task bar */
.taskbar {
  display: flex;
  flex: none;
  height: 39px;
  gap: 3px;
  border-top: 1px solid #d8e6f2;
  background: linear-gradient(90deg, #8faecb 0, #9fbbd7 4%, #a4bfdd 20%, #a1bddb 84%, #7f97b0 87%, #7b91aa 100%);
}
.task { display: grid; place-items: center; width: 59px; height: 39px; }
.calculator { width: 50px; padding-right: 9px; }
.task svg { width: 32px; height: 32px; }
.framed {
  border: 1px solid #50677f;
  border-radius: 3px;
  background: linear-gradient(135deg, #dce7f1, #a9c1db 60%, #b8cee5);
  box-shadow: inset 0 0 0 1px #e5eef6;
}
.tray { display: flex; align-items: center; gap: 6px; margin-left: auto; color: #fff; }
.tray svg { width: 18px; height: 18px; }
.tray-up { margin-right: 5px; border: 4px solid transparent; border-top: 0; border-bottom-color: #fff; }
.clock { align-self: flex-end; width: 9px; margin-left: 12px; overflow: hidden; line-height: 20px; }
```
